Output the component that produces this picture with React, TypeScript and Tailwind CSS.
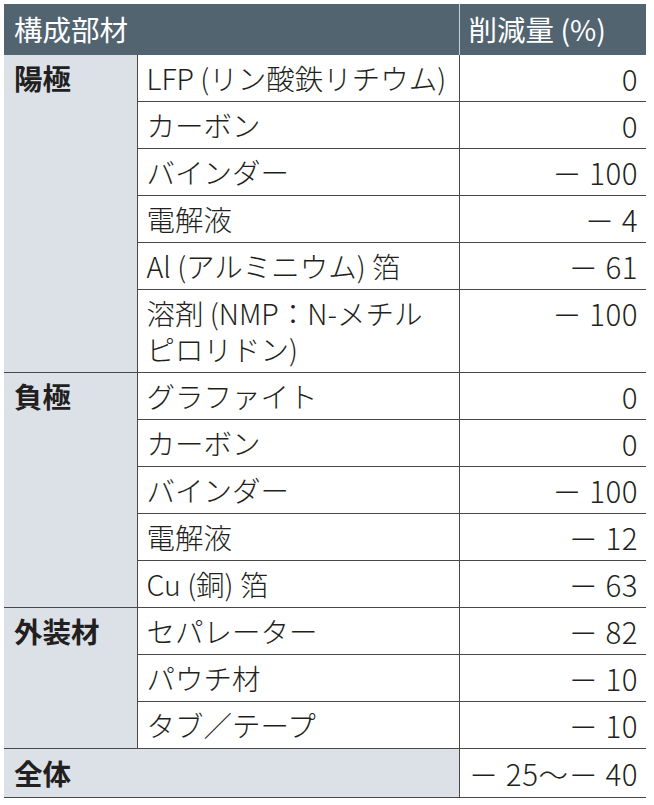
import React from "react"

type Item = { name: React.ReactNode; value: string }

const groups: { label: string; items: Item[] }[] = [
  {
    label: "陽極",
    items: [
      { name: "LFP (リン酸鉄リチウム)", value: "0" },
      { name: "カーボン", value: "0" },
      { name: "バインダー", value: "－ 100" },
      { name: "電解液", value: "－ 4" },
      { name: "Al (アルミニウム) 箔", value: "－ 61" },
      {
        name: (
          <>
            <div>溶剤 (NMP：N-メチル</div>
            <div>ピロリドン)</div>
          </>
        ),
        value: "－ 100",
      },
    ],
  },
  {
    label: "負極",
    items: [
      { name: "グラファイト", value: "0" },
      { name: "カーボン", value: "0" },
      { name: "バインダー", value: "－ 100" },
      { name: "電解液", value: "－ 12" },
      { name: "Cu (銅) 箔", value: "－ 63" },
    ],
  },
  {
    label: "外装材",
    items: [
      { name: "セパレーター", value: "－ 82" },
      { name: "パウチ材", value: "－ 10" },
      { name: "タブ／テープ", value: "－ 10" },
    ],
  },
]

export default function App() {
  return (
    <div className="min-h-[805px] bg-white pl-[4px] pt-[4px] font-['Noto_Sans_CJK_JP','Noto_Sans',sans-serif] text-[28.5px] text-[#231f20]">
      <table className="w-[642px] table-fixed border-collapse">
        <colgroup>
          <col className="w-[133px]" />
          <col className="w-[322px]" />
          <col className="w-[187px]" />
        </colgroup>
        <thead>
          <tr className="h-[51px] bg-[#52646f] text-white">
            <th colSpan={2} className="pl-[10px] text-left font-normal">
              構成部材
            </th>
            <th className="border-l border-[#c9d1d6] pl-[9px] text-left font-normal">
              削減量 (%)
            </th>
          </tr>
        </thead>
        <tbody className="leading-[36px]">
          {groups.map((g) =>
            g.items.map((item, i) => (
              <tr key={g.label + i}>
                {i === 0 && (
                  <td
                    rowSpan={g.items.length}
                    className="border-b border-[#4a4747] bg-[#dbe1e7] pl-[10px] pt-[5px] align-top font-bold"
                  >
                    {g.label}
                  </td>
                )}
                <td className="border-b border-l border-[#4a4747] py-[5px] pl-[9px] align-top font-light">
                  {item.name}
                </td>
                <td className="whitespace-pre border-b border-l border-[#4a4747] py-[5px] pr-[8px] text-right align-top text-[29.5px] font-light tracking-[0.5px]">
                  {item.value}
                </td>
              </tr>
            )),
          )}
          <tr>
            <td
              colSpan={2}
              className="h-[49px] border-b border-[#4a4747] bg-[#dbe1e7] pl-[10px] font-bold"
            >
              全体
            </td>
            <td className="whitespace-pre border-b border-l border-[#4a4747] pr-[8px] text-right text-[29.5px] font-light tracking-[0.5px]">
              {"－ 25～－ 40"}
            </td>
          </tr>
        </tbody>
      </table>
    </div>
  )
}
